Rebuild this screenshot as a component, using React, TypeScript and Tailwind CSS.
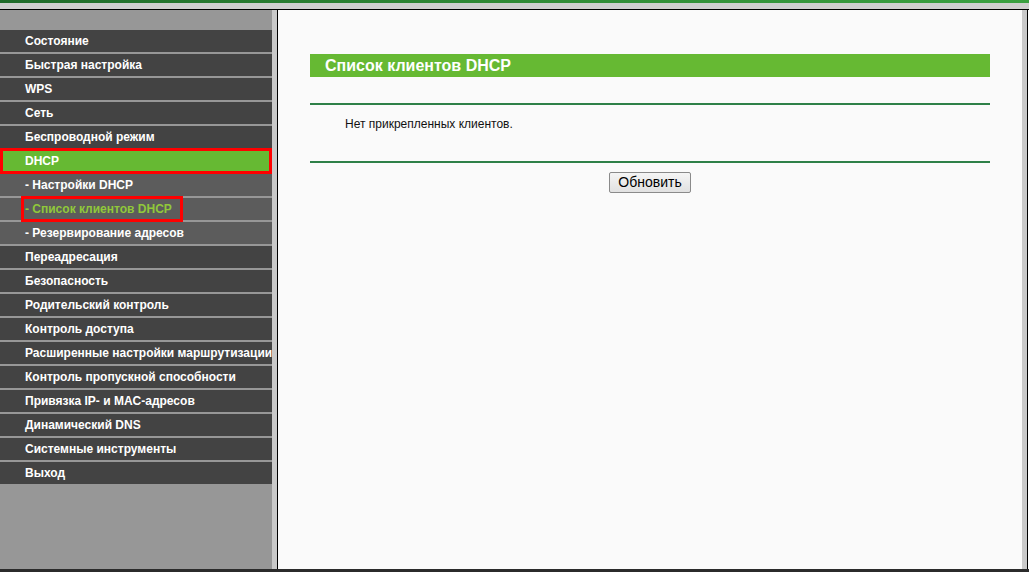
import React from "react";

type Item = { label: string; sub?: boolean; active?: boolean; current?: boolean };

const menu: Item[] = [
  { label: "Состояние" },
  { label: "Быстрая настройка" },
  { label: "WPS" },
  { label: "Сеть" },
  { label: "Беспроводной режим" },
  { label: "DHCP", active: true },
  { label: "- Настройки DHCP", sub: true },
  { label: "- Список клиентов DHCP", sub: true, current: true },
  { label: "- Резервирование адресов", sub: true },
  { label: "Переадресация" },
  { label: "Безопасность" },
  { label: "Родительский контроль" },
  { label: "Контроль доступа" },
  { label: "Расширенные настройки маршрутизации" },
  { label: "Контроль пропускной способности" },
  { label: "Привязка IP- и MAC-адресов" },
  { label: "Динамический DNS" },
  { label: "Системные инструменты" },
  { label: "Выход" },
];

function MenuRow({ item }: { item: Item }) {
  const bg = item.active ? "bg-[#66b933]" : item.sub ? "bg-[#5c5c5c]" : "bg-[#434343]";
  return (
    <div
      className={`relative h-[22px] mb-[2px] pl-[25px] text-[12px] leading-[22px] font-bold whitespace-nowrap ${bg} ${
        item.current ? "text-[#90c83a]" : "text-white"
      }`}
    >
      {item.label}
      {item.active && (
        <span className="absolute left-0 right-0 -top-[2px] -bottom-[2px] border-[3px] border-[#ff0000]" />
      )}
      {item.current && (
        <span className="absolute left-[21px] w-[162px] -top-[2px] -bottom-[2px] border-[3px] border-[#ff0000]" />
      )}
    </div>
  );
}

export default function App() {
  return (
    <div
      className="h-[572px] w-[1029px] flex flex-col overflow-hidden bg-white"
      style={{ fontFamily: '"Liberation Sans", Arial, sans-serif' }}
    >
      {/* top frame */}
      <div className="h-[3px] bg-gradient-to-r from-[#1f6b2a] via-[#2f8a35] to-[#3aa040]" />
      <div className="h-[6px] bg-[#cfcfcf]" />
      <div className="h-px bg-black" />

      <div className="flex-1 flex min-h-0">
        {/* Sidebar */}
        <div className="w-[272px] bg-[#979797] pt-[20px]">
          {menu.map((item) => (
            <MenuRow key={item.label} item={item} />
          ))}
        </div>
        <div className="w-[5px] bg-[#c9c9c9]" />
        <div className="w-px bg-black" />

        {/* Main content */}
        <div className="w-[744px] bg-[#fafafa] px-[32px] pt-[44px]">
          <div className="h-[23px] bg-[#66b933] pl-[15px] text-[16px] leading-[23px] font-bold text-white">
            Список клиентов DHCP
          </div>
          <div className="mt-[26px] h-[2px] bg-[#2e8048]" />
          <div className="pl-[35px] pt-[12px] h-[56px] text-[12px] leading-[14px] text-[#111]">
            Нет прикрепленных клиентов.
          </div>
          <div className="h-[2px] bg-[#2e8048]" />
          <div className="flex justify-center pt-[9px]">
            <button className="h-[21px] px-[8px] border border-[#8a8a8a] rounded-[2px] bg-gradient-to-b from-[#f5f5f5] to-[#e1e1e1] text-[14px] leading-[19px] text-black">
              Обновить
            </button>
          </div>
        </div>

        <div className="w-[5px] bg-[#c9c9c9]" />
        <div className="w-px bg-black" />
        <div className="flex-1 bg-white" />
      </div>

      <div className="h-[3px] bg-[#2b2b2b]" />
    </div>
  );
}
